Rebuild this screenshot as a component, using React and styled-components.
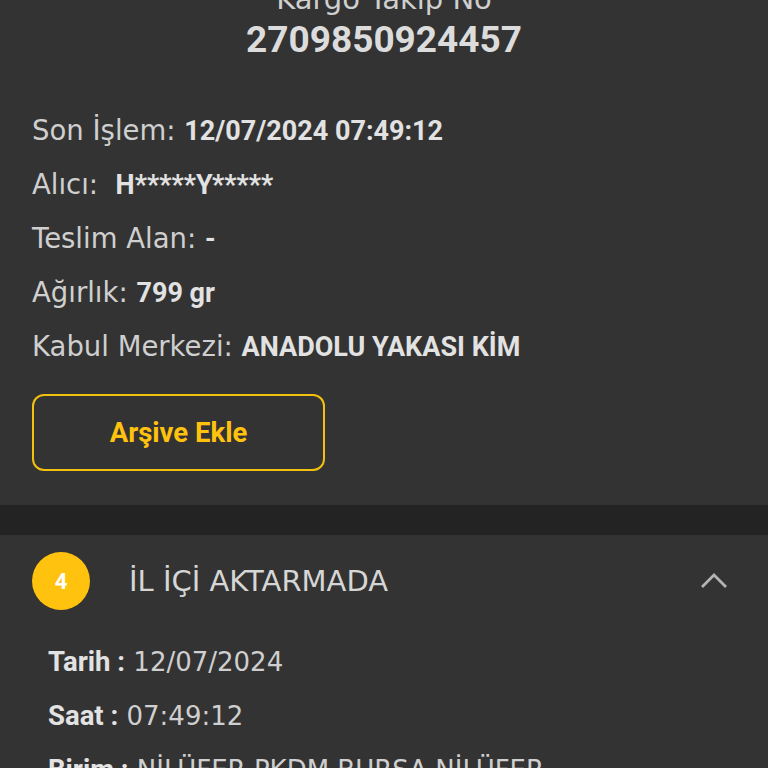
import React from 'react'
import styled, { createGlobalStyle } from 'styled-components'

const GlobalStyle = createGlobalStyle`
    html, body {
        margin: 0;
        padding: 0;
        background: #333333;
        overflow: hidden;
    }
`

const labelFont = `"DejaVu Sans", "Open Sans", sans-serif`
const valueFont = `Roboto, "Liberation Sans", sans-serif`

function App() {
    return (
        <Page>
            <GlobalStyle />
            <SummaryCard>
                <Header>
                    <HeaderLabel>Kargo Takip No</HeaderLabel>
                    <TrackingNumber>2709850924457</TrackingNumber>
                </Header>

                <InfoList>
                    <InfoRow>Son İşlem: <Value>12/07/2024 07:49:12</Value></InfoRow>
                    <InfoRow>Alıcı:&nbsp; <Value>H*****Y*****</Value></InfoRow>
                    <InfoRow>Teslim Alan: <Value>-</Value></InfoRow>
                    <InfoRow>Ağırlık: <Value>799 gr</Value></InfoRow>
                    <InfoRow>Kabul Merkezi: <Value>ANADOLU YAKASI KİM</Value></InfoRow>
                </InfoList>

                <ArchiveButton>Arşive Ekle</ArchiveButton>
            </SummaryCard>

            <Divider />

            <StepCard>
                <StepHeader>
                    <StepBadge>4</StepBadge>
                    <StepTitle>İL İÇİ AKTARMADA</StepTitle>
                    <Chevron viewBox="0 0 28 16">
                        <path d="M2 14 L14 2 L26 14" />
                    </Chevron>
                </StepHeader>
                <StepDetails>
                    <DetailRow><DetailLabel>Tarih :</DetailLabel> 12/07/2024</DetailRow>
                    <DetailRow><DetailLabel>Saat :</DetailLabel> 07:49:12</DetailRow>
                    <DetailRow><DetailLabel>Birim :</DetailLabel> NİLÜFER PKDM BURSA NİLÜFER</DetailRow>
                </StepDetails>
            </StepCard>
        </Page>
    )
}

export default App

const Page = styled.div`
    width: 768px;
    height: 768px;
    overflow: hidden;
    background: #333333;
`

const SummaryCard = styled.div`
    padding: 0 32px 34px;
    margin-top: -16px;
`

const Header = styled.div`
    display: flex;
    flex-direction: column;
    align-items: center;
`

const HeaderLabel = styled.div`
    font-family: ${labelFont};
    font-size: 29px;
    line-height: 30px;
    color: #cfcfcf;
`

const TrackingNumber = styled.div`
    font-family: ${valueFont};
    font-weight: 700;
    font-size: 37px;
    line-height: 48px;
    color: #dcdcdc;
    margin-top: 2px;
`

const InfoList = styled.div`
    display: flex;
    flex-direction: column;
    gap: 13px;
    margin-top: 46px;
`

const InfoRow = styled.div`
    font-family: ${labelFont};
    font-size: 27.5px;
    line-height: 40px;
    height: 41px;
    color: #cfcfcf;
    white-space: nowrap;
`

const Value = styled.span`
    font-family: ${valueFont};
    font-weight: 700;
    font-size: 27px;
    color: #e2e2e2;
`

const ArchiveButton = styled.button`
    margin-top: 27px;
    width: 293px;
    height: 77px;
    border: 2px solid #f2c00e;
    border-radius: 12px;
    background: transparent;
    color: #ffc20e;
    font-family: ${valueFont};
    font-weight: 700;
    font-size: 27.5px;
    cursor: pointer;
`

const Divider = styled.div`
    height: 30px;
    background: #232323;
`

const StepCard = styled.div`
    padding: 0 40px 0 32px;
`

const StepHeader = styled.div`
    display: flex;
    align-items: center;
    height: 92px;
`

const StepBadge = styled.div`
    width: 58px;
    height: 58px;
    border-radius: 50%;
    background: #ffc20e;
    color: #ffffff;
    display: flex;
    align-items: center;
    justify-content: center;
    font-family: ${valueFont};
    font-weight: 700;
    font-size: 22px;
    flex-shrink: 0;
`

const StepTitle = styled.div`
    flex: 1;
    margin-left: 39px;
    font-family: ${labelFont};
    font-weight: 400;
    font-size: 29px;
    color: #d6d6d6;
`

const Chevron = styled.svg`
    width: 28px;
    height: 16px;
    fill: none;
    stroke: #b4b4b4;
    stroke-width: 2.8;
`

const StepDetails = styled.div`
    display: flex;
    flex-direction: column;
    gap: 13px;
    padding-left: 16px;
    margin-top: 15px;
`

const DetailRow = styled.div`
    font-family: ${labelFont};
    font-size: 26px;
    line-height: 40px;
    height: 41px;
    color: #cfcfcf;
    white-space: nowrap;
`

const DetailLabel = styled.span`
    font-family: ${valueFont};
    font-weight: 700;
    font-size: 27.5px;
    color: #e2e2e2;
`
